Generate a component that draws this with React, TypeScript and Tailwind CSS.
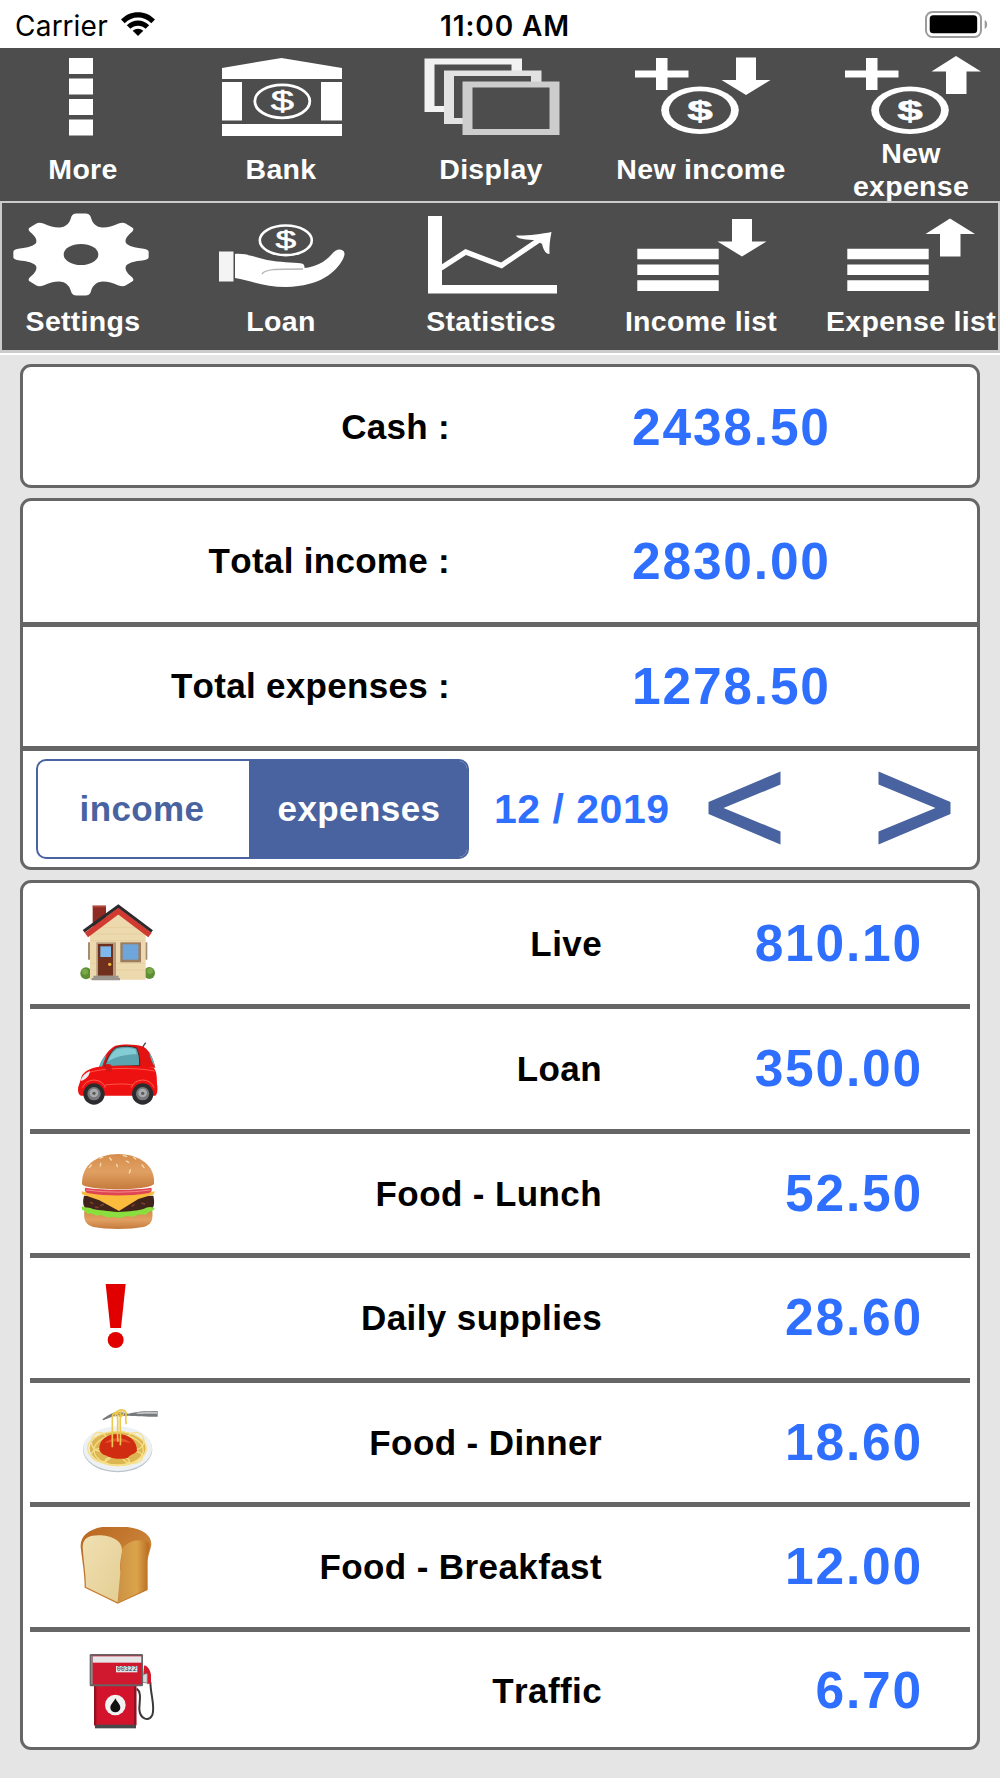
import type { ReactNode } from "react";

const ROUNDED = "font-['Arial_Rounded_MT_Bold','Liberation_Sans',sans-serif] font-bold [font-kerning:none]";

function Icon({ children }: { children: ReactNode }) {
  return (
    <svg viewBox="0 0 140 84" className="block w-[140px] h-[84px] shrink-0 overflow-visible" fill="#fff">
      {children}
    </svg>
  );
}

function Dollar({ x, y, size, stretch, bold }: { x: number; y: number; size: number; stretch: number; bold?: boolean }) {
  return (
    <text
      transform={`translate(${x} ${y}) scale(${stretch} 1)`}
      textAnchor="middle"
      fontFamily="Liberation Sans, sans-serif"
      fontWeight={bold ? 700 : 400}
      fontSize={size}
      stroke="#fff"
      strokeWidth={0.5}
    >
      $
    </text>
  );
}

function PlusCoin() {
  return (
    <>
      <path d="M4 18.5H25V6H36.5V18.5H57.5V25.5H36.5V38H25V25.5H4Z" />
      <ellipse cx="69" cy="58.3" rx="38.8" ry="23.8" />
      <ellipse cx="69" cy="58.3" rx="31" ry="19" fill="#4d4d4d" />
      <Dollar x={69} y={67.5} size={27} stretch={1.7} bold />
    </>
  );
}

const arrowDown = "M105 5.5H125V28H139.5L115 43L90.5 28H105Z";
const arrowUp = "M115 4L140 19.5H125.5V42H105V19.5H90.5Z";
const tooth =
  "M-13 -26C-8 -29 -6.8 -32 -5.8 -38Q-5 -41 -2.8 -41H2.8Q5 -41 5.8 -38C6.8 -32 8 -29 13 -26L0 0Z";

function MoreIcon() {
  return (
    <Icon>
      {[6, 26.5, 47, 67.5].map((y) => (
        <rect key={y} x="56" y={y} width="24" height="16" />
      ))}
    </Icon>
  );
}

function BankIcon() {
  return (
    <Icon>
      <path d="M11 16L70.5 6L131 16V27H11Z" />
      <path d="M11 30H31V68.5H11ZM110 30H131V68.5H110ZM11 72H131V84H11Z" />
      <ellipse cx="71.3" cy="49.3" rx="27.5" ry="16.5" fill="none" stroke="#fff" strokeWidth="2.8" />
      <Dollar x={71.3} y={58} size={27} stretch={1.55} />
    </Icon>
  );
}

function DisplayIcon() {
  return (
    <Icon>
      <rect x="3.5" y="6.5" width="97.5" height="53.5" fill="#f2f2f2" />
      <rect x="13.5" y="12.5" width="77" height="41.5" fill="#4d4d4d" />
      <rect x="23" y="18.5" width="97.5" height="53.5" fill="#e2e2e2" />
      <rect x="33" y="24" width="77" height="42" fill="#4d4d4d" />
      <rect x="41.5" y="29.5" width="97" height="53.5" fill="#cdcdcd" />
      <rect x="51.5" y="35.5" width="77" height="41.5" fill="#4d4d4d" />
    </Icon>
  );
}

function SettingsIcon() {
  return (
    <Icon>
      <g transform="translate(68 45.5) scale(1.65 1)">
        <circle r="29.5" />
        {[0, 45, 90, 135, 180, 225, 270, 315].map((a) => (
          <path key={a} d={tooth} transform={`rotate(${a})`} />
        ))}
        <circle r="10.5" fill="#4d4d4d" />
      </g>
    </Icon>
  );
}

function LoanIcon() {
  return (
    <Icon>
      <ellipse cx="74.8" cy="31.3" rx="26" ry="14.8" fill="none" stroke="#fff" strokeWidth="2.6" />
      <Dollar x={74.8} y={39} size={24} stretch={1.55} />
      <rect x="8" y="42.5" width="14.5" height="30" fill="#f4f4f4" />
      <path d="M24 45C34 44 44 48 56 51C70 53.5 80 53 91 54.5Q94 55.5 93.5 59C104 58 114 53 120 46C124 41 128 39.5 131 41Q135.5 43 132 50C125 63 110 77 75 78C55 78 40 72 24 69Z" />
      <path d="M51 65C54 60 64 60 92 60" fill="none" stroke="#b5b5b5" strokeWidth="1.5" />
    </Icon>
  );
}

function StatisticsIcon() {
  return (
    <Icon>
      <path d="M7 7H21V76H136V84.5H7Z" />
      <path d="M20 59L44.7 43L80.5 56.5L121 29" fill="none" stroke="#fff" strokeWidth="5.2" />
      <path d="M130.5 23C120 25 105 27 95 26.5C96 30 106 31 115 31L121 35C122 39 124 45 128.5 45C128 38 129 30 130.5 23Z" />
    </Icon>
  );
}

function ListBars() {
  return <path d="M6.3 39.7H87.7V50.3H6.3ZM6.3 55.5H87.7V66H6.3ZM6.3 71.3H87.7V82H6.3Z" />;
}

const TOP_ITEMS = [
  { label: "More", icon: <MoreIcon /> },
  { label: "Bank", icon: <BankIcon /> },
  { label: "Display", icon: <DisplayIcon /> },
  {
    label: "New income",
    icon: (
      <Icon>
        <PlusCoin />
        <path d={arrowDown} />
      </Icon>
    ),
  },
  {
    label: "New expense",
    icon: (
      <Icon>
        <PlusCoin />
        <path d={arrowUp} />
      </Icon>
    ),
  },
];

const BOTTOM_ITEMS = [
  { label: "Settings", icon: <SettingsIcon /> },
  { label: "Loan", icon: <LoanIcon /> },
  { label: "Statistics", icon: <StatisticsIcon /> },
  {
    label: "Income list",
    icon: (
      <Icon>
        <ListBars />
        <path d={arrowDown} transform="translate(-4 4.5)" />
      </Icon>
    ),
  },
  {
    label: "Expense list",
    icon: (
      <Icon>
        <ListBars />
        <path d={arrowUp} transform="translate(-6 5.5)" />
      </Icon>
    ),
  },
];

function House() {
  return (
    <svg viewBox="54 40 240 240" className="w-20 h-20">
      <rect x="98" y="45" width="40" height="62" fill="#8f2b22" />
      <rect x="98" y="45" width="40" height="5" fill="#b5493c" />
      <ellipse cx="78" cy="248" rx="17" ry="18" fill="#5f8f35" />
      <ellipse cx="268" cy="247" rx="17" ry="18" fill="#5f8f35" />
      <circle cx="75" cy="243" r="9" fill="#79a848" />
      <circle cx="270" cy="241" r="9" fill="#79a848" />
      <path d="M84 155H92V207H84ZM254 155H262V207H254Z" fill="#a58c74" />
      <path d="M90 128L175 58L257 128V267H90Z" fill="#edd9ae" />
      <path d="M92 150H256M92 130H256M92 218H256M92 238H256M120 110H230" stroke="#dfc795" strokeWidth="1.5" />
      <path d="M79 133L175 61L270 133" fill="none" stroke="#d13a30" strokeWidth="17" />
      <path d="M71 122L175 46L276 122" fill="none" stroke="#2b2a2c" strokeWidth="9" />
      <rect x="109" y="155" width="59" height="102" fill="#b69a7c" />
      <rect x="114" y="160" width="45" height="95" fill="#6f301d" />
      <rect x="121" y="167" width="32" height="32" fill="#7fb8ea" />
      <circle cx="149" cy="221" r="5" fill="#f0b73c" />
      <rect x="181" y="155" width="62" height="60" fill="#9c7d62" />
      <rect x="188" y="161" width="47" height="46" fill="#6ea6dc" />
      <path d="M100 255H176V262H180V269H95V262H100Z" fill="#9b958d" />
    </svg>
  );
}

function Car() {
  return (
    <svg viewBox="54 414 240 240" className="w-20 h-20">
      <path d="M247 470L257 455" stroke="#444" strokeWidth="4" />
      <path d="M117 528C128 500 146 474 166 464C190 458 230 459 250 467C270 478 280 505 286 530Z" fill="#e31313" />
      <path d="M268 486C278 500 283 518 285 528C276 515 270 500 268 486ZM117 527C122 510 132 498 140 490L126 527Z" fill="#55b9c4" />
      <path d="M134 527C141 500 156 476 170 469C190 464 215 465 230 471C237 485 240 505 239 524Z" fill="#5ba3ae" stroke="#57201e" strokeWidth="3" />
      <path d="M144 512C150 495 160 480 172 474C190 470 210 470 226 475L230 490C200 490 165 497 144 512Z" fill="#83ccd3" />
      <path d="M62 566C66 544 84 534 112 528C165 523 230 522 280 530C291 537 291 565 291 580C294 590 292 612 286 614H64C52 612 53 590 56 584Z" fill="#ee1111" />
      <path d="M134 582C170 578 200 578 219 582M80 546C130 530 220 528 284 540" stroke="#ff5548" strokeWidth="3" fill="none" />
      <path d="M62 570C66 554 76 546 90 540C88 555 78 566 62 570Z" fill="#e9eef0" />
      <path d="M68 590A35 30 0 0 1 136 590M214 590A35 30 0 0 1 282 590" fill="none" stroke="#ff6055" strokeWidth="3" />
      <path d="M134 528C133 516 154 517 155 526V540C147 544 136 541 134 528Z" fill="#cf1515" />
      {[102, 248].map((x) => (
        <g key={x}>
          <circle cx={x} cy="609" r="32" fill="#2c2c2e" />
          <circle cx={x} cy="608" r="20" fill="#77797b" />
          <circle cx={x} cy="606" r="13" fill="#a9abad" />
          <circle cx={x} cy="607" r="5" fill="#5a5b5d" />
        </g>
      ))}
    </svg>
  );
}

function Burger() {
  return (
    <svg viewBox="54 37 240 240" className="w-20 h-20">
      <defs>
        <linearGradient id="bun" x1="0" y1="0" x2="0" y2="1">
          <stop offset="0" stopColor="#d58d4d" />
          <stop offset="0.5" stopColor="#e0a062" />
          <stop offset="1" stopColor="#c47a3b" />
        </linearGradient>
      </defs>
      <path d="M73 208H277C280 238 272 250 250 256C210 264 140 264 100 256C78 250 70 236 73 208Z" fill="url(#bun)" />
      <path d="M72 162H280C284 180 284 196 272 206C230 216 120 216 86 206C66 196 68 180 72 162Z" fill="#40231a" />
      <path d="M90 182L100 186M120 192L132 188M215 194L224 188M244 184L256 188M105 196L116 198" stroke="#7a3e2c" strokeWidth="5" />
      <path d="M66 194C78 200 88 196 98 202C120 206 140 208 174 211C210 210 236 206 250 202C264 194 274 194 284 200C280 212 268 206 262 216C250 224 240 214 228 222C215 230 205 218 192 226C178 233 165 222 152 227C138 232 130 217 118 221C104 225 98 214 88 216C78 218 76 206 66 204Z" fill="#8ade3e" />
      <path d="M65 149C120 160 220 162 284 149L282 158L235 172L177 208L118 176L66 158Z" fill="#fbbb3d" />
      <path d="M76 138C130 146 220 146 274 138C278 148 272 154 262 155C210 164 140 164 86 155C76 152 72 146 76 138Z" fill="#df4453" />
      <path d="M78 145Q175 158 272 145" fill="none" stroke="#f28b86" strokeWidth="3" />
      <path d="M66 128C64 70 110 38 175 37C240 38 286 72 282 126C270 148 80 148 66 128Z" fill="url(#bun)" />
      <path d="M149 49L154 55M170 68L172 75M122 65L121 73M94 70L88 78M199 58L206 62M211 84L208 94M246 70L252 78M221 47L227 52M190 42L200 44M120 49L128 47" stroke="#f4dcae" strokeWidth="4" strokeLinecap="round" />
    </svg>
  );
}

function Exclamation() {
  return (
    <svg viewBox="54 411 240 240" className="w-20 h-20" fill="#e00000">
      <path d="M137 429H197L183 561H151Z" />
      <circle cx="167" cy="597" r="24" />
    </svg>
  );
}

function Spaghetti() {
  return (
    <svg viewBox="54 34 240 240" className="w-20 h-20">
      <ellipse cx="173" cy="174" rx="104" ry="68" fill="#b9c4cc" />
      <ellipse cx="173" cy="171" rx="103" ry="67" fill="#eef1f3" />
      <ellipse cx="173" cy="170" rx="84" ry="51" fill="#dcb653" />
      <g fill="none" stroke="#f6df87" strokeWidth="4">
        <ellipse cx="171" cy="170" rx="88" ry="50" />
        <ellipse cx="176" cy="176" rx="74" ry="46" />
        <ellipse cx="118" cy="150" rx="24" ry="28" />
        <ellipse cx="226" cy="148" rx="26" ry="26" />
        <ellipse cx="124" cy="190" rx="30" ry="20" />
        <ellipse cx="218" cy="196" rx="30" ry="19" />
        <ellipse cx="172" cy="208" rx="36" ry="14" />
      </g>
      <path d="M118 174C116 145 140 127 173 127C208 127 232 148 231 178C224 188 210 188 204 198C186 204 160 202 148 196C138 190 124 190 118 174Z" fill="#cf2c12" />
      <path d="M135 155C150 136 195 134 212 155C190 148 158 148 135 155Z" fill="#e9502c" />
      <path d="M127 83C145 70 155 62 180 60L205 66C230 60 250 58 293 58V75C255 75 235 74 205 72L160 74L130 86Z" fill="#77797b" />
      <path d="M230 63C250 60 270 60 291 60V66C265 66 248 66 230 67Z" fill="#c4c7c9" />
      <g fill="none" stroke="#ecc951" strokeWidth="5">
        <path d="M157 167V78C157 64 166 58 180 66" />
        <path d="M174 150C170 120 176 95 172 74" />
        <path d="M181 161C184 120 176 90 184 56" />
        <path d="M166 74C164 54 196 48 198 64C200 76 194 80 199 98" />
        <path d="M168 64C178 80 196 76 190 56" />
      </g>
    </svg>
  );
}

function Bread() {
  return (
    <svg viewBox="54 408 240 240" className="w-20 h-20">
      <defs>
        <linearGradient id="crust" x1="0" y1="0" x2="1" y2="1">
          <stop offset="0" stopColor="#b9651f" />
          <stop offset="0.6" stopColor="#c98338" />
          <stop offset="1" stopColor="#b8701f" />
        </linearGradient>
        <linearGradient id="side" x1="0" y1="0" x2="1" y2="0">
          <stop offset="0" stopColor="#cb9143" />
          <stop offset="0.6" stopColor="#dba44c" />
          <stop offset="1" stopColor="#b86a20" />
        </linearGradient>
        <linearGradient id="crumb" x1="0" y1="0" x2="1" y2="1">
          <stop offset="0" stopColor="#f0e0b2" />
          <stop offset="1" stopColor="#e3cd92" />
        </linearGradient>
      </defs>
      <path d="M62 468C60 430 95 406 160 405C235 406 274 425 274 460C272 480 263 490 263 520V597L173 638L74 590C74 550 68 520 62 468Z" fill="url(#crust)" />
      <path d="M186 475C200 450 240 440 266 455C272 468 262 485 260 515V594L174 635Z" fill="url(#side)" />
      <path d="M68 468C68 440 90 432 122 433C162 436 188 452 186 480C184 500 178 515 181 545L173 634L78 588C78 550 70 510 68 468Z" fill="url(#crumb)" />
    </svg>
  );
}

function FuelPump() {
  return (
    <svg viewBox="54 780 240 240" className="w-20 h-20">
      <path d="M230 893C246 905 238 930 238 955C240 982 264 995 277 972C286 945 272 915 271 872" fill="none" stroke="#3a3a3c" strokeWidth="6" />
      <path d="M252 824C262 822 272 840 273 852V876L262 880V850H250Z" fill="#d4182c" />
      <path d="M248 852L262 846V876L248 874Z" fill="#d8d8da" stroke="#5b5b5e" strokeWidth="2" />
      <rect x="102" y="884" width="127" height="120" fill="#d2132b" />
      <path d="M102 884H109V1002H102ZM222 884H229V1002H222Z" fill="#8e1222" />
      <rect x="105" y="1001" width="123" height="11" fill="#48484a" />
      <rect x="89" y="789" width="160" height="97" rx="4" fill="#656568" />
      <rect x="93" y="794" width="152" height="86" fill="#d0182e" />
      <rect x="98" y="796" width="146" height="19" fill="#e6e6e8" />
      <path d="M93 794H98V880H93Z" fill="#8b8b8e" />
      <rect x="168" y="825" width="64" height="19" fill="#e9e4e4" />
      <text x="200" y="841" textAnchor="middle" fontFamily="Liberation Mono, monospace" fontSize="20" fontWeight="400" fill="#333">
        00322
      </text>
      <circle cx="166" cy="942" r="31" fill="#f2f2f2" />
      <path d="M166 922C172 934 181 940 181 950A15 14 0 0 1 151 950C151 940 161 934 166 922Z" fill="#111" />
    </svg>
  );
}

const EXPENSES = [
  { name: "Live", amount: "810.10", icon: <House /> },
  { name: "Loan", amount: "350.00", icon: <Car /> },
  { name: "Food - Lunch", amount: "52.50", icon: <Burger /> },
  { name: "Daily supplies", amount: "28.60", icon: <Exclamation /> },
  { name: "Food - Dinner", amount: "18.60", icon: <Spaghetti /> },
  { name: "Food - Breakfast", amount: "12.00", icon: <Bread /> },
  { name: "Traffic", amount: "6.70", icon: <FuelPump /> },
];

function StatusBar() {
  return (
    <div className="flex h-12 items-center justify-between bg-white pl-[15px] pr-3 pt-[3px] font-['Inter',sans-serif] text-[28px] font-normal text-black">
      <div className="flex w-[300px] items-center">
        <span className="w-[106px] whitespace-nowrap tracking-[0.3px]">Carrier</span>
        <svg viewBox="0 0 34 24" className="w-[34px] h-6 -mt-[3px]">
          <path d="M0 7.5C9 -2.3 25 -2.3 34 7.5L30.3 11.2C23 3.6 11 3.6 3.7 11.2Z" />
          <path d="M5.8 13.2C12 6.8 22 6.8 28.2 13.2L24.6 16.8C20.5 12.7 13.5 12.7 9.4 16.8Z" />
          <path d="M11.7 18.8C14.7 16.1 19.3 16.1 22.3 18.8L17 24Z" />
        </svg>
      </div>
      <span className="pl-[7px] font-semibold tracking-[0.9px]">11:00 AM</span>
      <div className="flex w-[300px] justify-end">
        <svg viewBox="0 0 63 27" className="w-[63px] h-[27px] -mt-[3px]">
          <rect x="1" y="1" width="55" height="25" rx="6.5" fill="none" stroke="#9b9b9b" strokeWidth="2" />
          <rect x="4.7" y="4.3" width="47.5" height="18" rx="3.5" />
          <path d="M59.7 9C63 10.5 63 16.5 59.7 18Z" fill="#9b9b9b" />
        </svg>
      </div>
    </div>
  );
}

function ToolbarItem({ label, icon, className }: { label: string; icon: ReactNode; className: string }) {
  return (
    <button className={`flex shrink-0 flex-col items-center pt-1 ${className}`}>
      {icon}
      <span className="flex flex-1 items-center justify-center">
        <span className="max-w-[174px] text-center text-[28.5px] leading-[33px] tracking-[0.3px]">{label}</span>
      </span>
    </button>
  );
}

function SummaryRow({ label, value, className }: { label: string; value: string; className: string }) {
  return (
    <div className={`flex items-center ${className}`}>
      <span className="w-[427px] text-right text-[35px] tracking-[0.3px]">{label}</span>
      <span className="ml-[182px] text-[51.5px] leading-none tracking-[1.8px] text-[#2f6fff]">{value}</span>
    </div>
  );
}

export default function App() {
  return (
    <div className={`w-[1000px] h-[1778px] overflow-hidden bg-[#e5e5e5] text-black ${ROUNDED}`}>
      <StatusBar />

      <header className="border-b-2 border-white text-white">
        <div className="flex h-[153px] items-start overflow-hidden bg-[#4d4d4d]">
          {TOP_ITEMS.map((item, i) => (
            <ToolbarItem key={item.label} {...item} className={i === 0 ? "h-[155px] w-[166px] mr-[10px]" : "h-[155px] w-[210px]"} />
          ))}
        </div>
        <div className="flex h-[152px] overflow-hidden border-2 border-b-[3px] border-[#cbcbcb] bg-[#4d4d4d]">
          {BOTTOM_ITEMS.map((item, i) => (
            <ToolbarItem key={item.label} {...item} className={i === 0 ? "w-[162px] mr-[12px] mt-[2px]" : "w-[210px] mt-[2px]"} />
          ))}
        </div>
      </header>

      <main className="flex flex-col gap-[10px] px-5 pt-[9px]">
        <section className="h-[124px] rounded-[11px] border-[3px] border-[#666] bg-white">
          <SummaryRow label="Cash :" value="2438.50" className="h-full pt-[3px]" />
        </section>

        <section className="h-[372px] rounded-[11px] border-[3px] border-[#666] bg-white">
          <SummaryRow label="Total income :" value="2830.00" className="h-[126px] border-b-[5px] border-[#666]" />
          <SummaryRow label="Total expenses :" value="1278.50" className="h-[124px] border-b-[5px] border-[#666]" />
          <div className="flex h-[116px] items-center pl-[13px]">
            <div className="flex h-[100px] w-[433px] overflow-hidden rounded-[10px] border-2 border-[#4963a0] text-[35px] tracking-[0.4px]">
              <button className="w-[211px] pr-[3px] text-[#4963a0]">income</button>
              <button className="flex-1 bg-[#4963a0] pl-[2px] text-white">expenses</button>
            </div>
            <span className="ml-[25px] w-[182px] whitespace-nowrap pt-px text-[41px] leading-none tracking-[0.5px] text-[#2f6fff]">
              12 / 2019
            </span>
            <svg viewBox="0 0 73 74" className="ml-[32px] w-[73px] h-[74px] -mt-[3px]" fill="#4963a0">
              <path d="M72.5 0.5V13.5L15.5 37L72.5 60.5V73.5L0.5 43V31Z" />
            </svg>
            <svg viewBox="0 0 73 74" className="ml-[97px] w-[73px] h-[74px] -mt-[3px]" fill="#4963a0">
              <path d="M0.5 0.5V13.5L57.5 37L0.5 60.5V73.5L72.5 43V31Z" />
            </svg>
          </div>
        </section>

        <section className="h-[870px] rounded-[11px] border-[3px] border-[#666] bg-white px-[7px]">
          {EXPENSES.map((e) => (
            <div
              key={e.name}
              className="flex h-[124.5px] items-center border-b-[5px] border-[#666] pl-12 pr-[47px] pt-px first:h-[126px] last:h-[116px] last:border-b-0 last:pt-[3px]"
            >
              {e.icon}
              <span className="w-[444px] text-right text-[35px] tracking-[0.4px]">{e.name}</span>
              <span className="-mt-px flex-1 text-right text-[51.5px] leading-none tracking-[1.8px] text-[#2f6fff]">{e.amount}</span>
            </div>
          ))}
        </section>
      </main>
    </div>
  );
}
